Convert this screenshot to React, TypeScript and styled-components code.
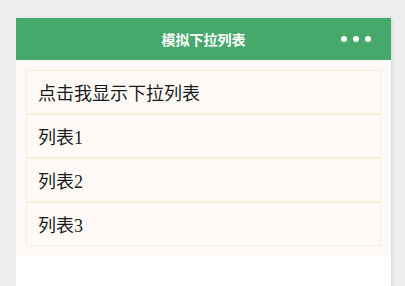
import styled, { createGlobalStyle } from "styled-components";

const GlobalStyle = createGlobalStyle`
    html, body {
        margin: 0;
        padding: 0;
        background: #ededed;
    }
`;

const Page = styled.div`
    padding: 18px 0 0 16px;
    height: 286px;
    box-sizing: border-box;
    overflow: hidden;
`;

const Phone = styled.div`
    width: 375px;
    height: 268px;
    background: #ffffff;
    box-shadow: 2px 0 3px rgba(0, 0, 0, 0.08);
`;

const Header = styled.div`
    height: 42px;
    background: #47a86c;
    display: grid;
    grid-template-columns: 1fr auto 1fr;
    align-items: center;
`;

const Title = styled.div`
    grid-column: 2;
    color: #ffffff;
    font-family: "Noto Sans CJK SC", "Liberation Sans", sans-serif;
    font-weight: 700;
    font-size: 14px;
`;

const Dots = styled.div`
    justify-self: end;
    display: flex;
    gap: 6px;
    padding-right: 20px;
`;

const Dot = styled.span`
    width: 6px;
    height: 6px;
    border-radius: 50%;
    background: #ffffff;
`;

const List = styled.div`
    background: #fdf9f7;
    padding: 10px;
    display: flex;
    flex-direction: column;
`;

const Item = styled.div`
    height: 42px;
    border: 1px solid #f6f0d8;
    background: #fffaf8;
    padding-left: 11px;
    display: flex;
    align-items: center;
    font-family: "Liberation Serif", "Noto Sans CJK SC", serif;
    font-size: 18px;
    color: #1a1a1a;
`;

const items = ["点击我显示下拉列表", "列表1", "列表2", "列表3"];

function App() {
    return (
        <>
            <GlobalStyle />
            <Page>
                <Phone>
                    <Header>
                        <Title>模拟下拉列表</Title>
                        <Dots>
                            <Dot />
                            <Dot />
                            <Dot />
                        </Dots>
                    </Header>
                    <List>
                        {items.map((text, index) => (
                            <Item key={index}>{text}</Item>
                        ))}
                    </List>
                </Phone>
            </Page>
        </>
    );
}

export default App;
